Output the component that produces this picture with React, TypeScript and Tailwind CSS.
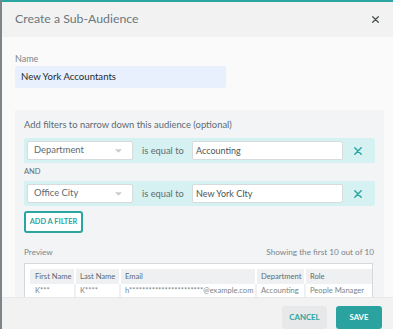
import React from 'react';

const rows = [
  { first: 'K***', last: 'K****', email: 'h***********************@example.com', dept: 'Accounting', role: 'People Manager' },
];

const Caret = () => (
  <svg width="7" height="4" viewBox="0 0 8 4" className="text-[#c8cdd0]">
    <path d="M0 0h8L4 4z" fill="currentColor" />
  </svg>
);

const XIcon: React.FC<{ className?: string; size?: number }> = ({ className, size = 9 }) => (
  <svg width={size} height={size} viewBox="0 0 10 10" className={className}>
    <path d="M1 1l8 8M9 1L1 9" stroke="currentColor" strokeWidth="1.8" strokeLinecap="round" />
  </svg>
);

const FilterRow: React.FC<{ field: string; value: string }> = ({ field, value }) => (
  <div className="flex items-center h-[25px] bg-[#d5f1f1] rounded-[2px] pl-[3px] pr-[3px]">
    <div className="flex items-center justify-between w-[106px] h-[19px] bg-white border border-[#d7dbdd] rounded-[2px] pl-[6px] pr-[10px] text-[9.4px] text-[#5d6b72]">
      <span>{field}</span>
      <Caret />
    </div>
    <span className="ml-[9px] w-[50px] text-[9.3px] text-[#5d6b72]">is equal to</span>
    <div className="flex items-center w-[151px] h-[19px] bg-white border border-[#d7dbdd] rounded-[2px] pl-[3px] text-[9px] text-[#4a5659]">
      {value}
    </div>
    <div className="flex-1 flex justify-center">
      <XIcon className="text-[#2aa5a2]" size={8} />
    </div>
  </div>
);

export default function App() {
  return (
    <div className="w-[393px] h-[329px] overflow-hidden bg-[#7d8588] font-['Lato','Open_Sans',sans-serif]">
      <div className="ml-[2px] h-full flex flex-col border-t-2 border-[#2aa5a2] bg-[#fafafa]">
        <div className="h-[35px] shrink-0 flex items-center justify-between bg-[#f2f2f2] pl-[13px] pr-[14px]">
          <span className="text-[12.3px] text-[#6a777d]">Create a Sub-Audience</span>
          <XIcon className="text-[#4a4f52]" size={7} />
        </div>
        <div className="flex-1 overflow-hidden pt-[15px] pl-[13px] pr-[9px]">
          <div className="text-[9px] leading-[13px] text-[#7a868b]">Name</div>
          <div className="mt-[1px] w-[211px] h-[22px] flex items-center bg-[#e8f0fe] rounded-[2px] pl-[6px] text-[9.6px] text-[#1f2a2e]">
            New York Accountants
          </div>
          <div className="mt-[22px] bg-[#f3f4f5] pt-[8px] pl-[9px] pr-[9px] pb-[20px]">
            <div className="text-[9.4px] leading-[13px] text-[#5d6b72]">Add filters to narrow down this audience (optional)</div>
            <div className="mt-[7px]">
              <FilterRow field="Department" value="Accounting" />
            </div>
            <div className="h-[18px] flex items-center text-[7.5px] text-[#5d6b72]">AND</div>
            <FilterRow field="Office City" value="New York CIty" />
            <button className="mt-[4px] h-[22px] w-[59px] border-2 border-[#2aa5a2] rounded-[3px] bg-white text-[7.4px] font-bold text-[#2aa5a2]">
              ADD A FILTER
            </button>
            <div className="mt-[13px] flex justify-between items-end text-[8.2px] text-[#7a868b]">
              <span>Preview</span>
              <span className="mr-[1px]">Showing the first 10 out of 10</span>
            </div>
            <div className="mt-[5px] w-[349px] border border-[#d5d9db] bg-white pt-[5px] pl-[5px]">
              <table className="w-full table-fixed border-collapse text-[7.6px] whitespace-nowrap">
                <colgroup>
                  <col className="w-[45px]" />
                  <col className="w-[45px]" />
                  <col className="w-[136px]" />
                  <col className="w-[49px]" />
                  <col />
                </colgroup>
                <thead>
                  <tr className="bg-[#eef0f1] text-[#5d6b72] h-[15px] text-left">
                    <th className="font-normal pl-[5px] border-r-2 border-white">First Name</th>
                    <th className="font-normal pl-[4px] border-r-2 border-white">Last Name</th>
                    <th className="font-normal pl-[4px] border-r-2 border-white">Email</th>
                    <th className="font-normal pl-[4px] border-r-2 border-white">Department</th>
                    <th className="font-normal pl-[4px]">Role</th>
                  </tr>
                </thead>
                <tbody>
                  {rows.map((r) => (
                    <tr key={r.email} className="h-[14px] text-[#7a868b]">
                      <td className="pl-[5px] border-r-2 border-[#eef0f1]">{r.first}</td>
                      <td className="pl-[4px] border-r-2 border-[#eef0f1]">{r.last}</td>
                      <td className="pl-[4px] border-r-2 border-[#eef0f1] overflow-hidden">{r.email}</td>
                      <td className="pl-[4px] border-r-2 border-[#eef0f1]">{r.dept}</td>
                      <td className="pl-[4px]">{r.role}</td>
                    </tr>
                  ))}
                </tbody>
              </table>
            </div>
          </div>
        </div>
        <div className="h-[32px] shrink-0 flex items-start justify-end gap-[9px] pt-[8px] pr-[11px] bg-[#f2f2f2] border-t border-[#e6e8e9]">
          <button className="w-[45px] h-[23px] rounded-[3px] bg-[#e7e8e9] text-[7.8px] font-bold text-[#2aa5a2]">CANCEL</button>
          <button className="w-[46px] h-[23px] rounded-[3px] bg-[#2aa3a0] text-[7.8px] font-bold text-white">SAVE</button>
        </div>
      </div>
    </div>
  );
}
